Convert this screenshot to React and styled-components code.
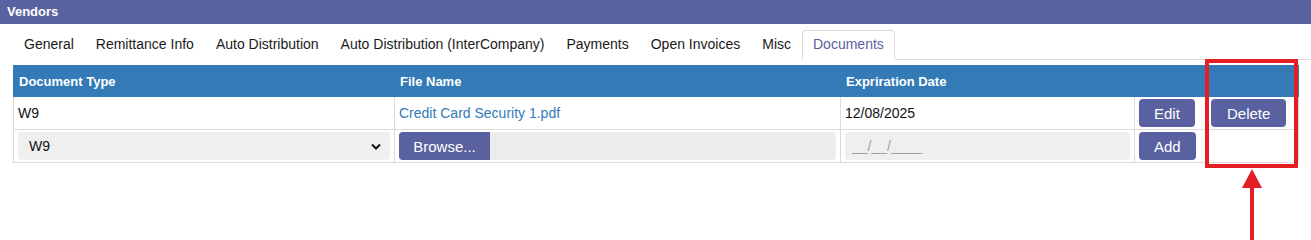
import styled, { createGlobalStyle } from 'styled-components';

const Global = createGlobalStyle`
  * { box-sizing: border-box; }
  html, body { margin: 0; min-height: 240px; background: #fff; }
  body {
    font-family: "Liberation Sans", Arial, sans-serif;
    color: #111;
  }
  #root { min-height: 240px; }
`;

const TitleBar = styled.div`
  height: 24px;
  background: #5961a0;
  color: #fff;
  font-size: 13px;
  font-weight: 700;
  padding: 0 7px 2px;
  display: flex;
  align-items: center;
`;

const Content = styled.div`
  padding: 6px 13px 0;
`;

const Tabs = styled.ul`
  list-style: none;
  margin: 0 -13px 0 0;
  padding: 0;
  display: flex;
  border-bottom: 1px solid #dcdcdc;
  height: 30px;
`;

const Tab = styled.li`
  padding: 0 10px 2px;
  height: 30px;
  display: flex;
  align-items: center;
  font-size: 14px;
  color: ${p => (p.$active ? '#5961a0' : '#1a1a1a')};
  border: 1px solid ${p => (p.$active ? '#dcdcdc' : 'transparent')};
  border-bottom-color: ${p => (p.$active ? '#fff' : 'transparent')};
  border-radius: 4px 4px 0 0;
  background: #fff;
  margin-bottom: -1px;
`;

const TableWrap = styled.div`
  position: relative;
  margin-top: 5px;
  height: 180px;
`;

const Table = styled.table`
  width: 1285px;
  border-collapse: collapse;
  table-layout: fixed;
  font-size: 14px;
`;

const Th = styled.th`
  width: ${p => p.$w}px;
  height: 31px;
  background: #337ab7;
  color: #fff;
  font-size: 13px;
  font-weight: 700;
  text-align: left;
  padding: 0 5px;
  border: 1px solid #337ab7;
  border-left-color: #d6e2ee;
  &:first-child { border-left-color: #337ab7; }
`;

const Td = styled.td`
  border: 1px solid #dcdcdc;
  padding: 2px 4px;
  height: 33px;
  vertical-align: middle;
  white-space: nowrap;
`;

const Link = styled.a`
  color: #337ab7;
  text-decoration: none;
`;

const Button = styled.button`
  height: 28px;
  padding: 0 ${p => (p.$wide ? 16 : 15)}px;
  margin-left: ${p => (p.$wide ? 1 : 0)}px;
  border: none;
  border-radius: 4px;
  background: #5961a0;
  color: #fff;
  font-family: inherit;
  font-size: 15px;
  display: block;
`;

const SelectBox = styled.div`
  height: 28px;
  background: #efefef;
  border-radius: 4px;
  display: flex;
  align-items: center;
  justify-content: space-between;
  padding: 0 9px 0 11px;
  font-size: 14px;
`;

const FileBox = styled.div`
  height: 28px;
  background: #ececec;
  border-radius: 4px;
  display: flex;
`;

const BrowseBtn = styled.span`
  width: 91px;
  background: #5961a0;
  color: #fff;
  border-radius: 4px 0 0 4px;
  font-size: 15px;
  display: flex;
  align-items: center;
  justify-content: center;
`;

const DateBox = styled.div`
  height: 28px;
  background: #efefef;
  border-radius: 4px;
  display: flex;
  align-items: center;
  padding: 0 7px;
  color: #a0a0a0;
  font-size: 14px;
`;

const Highlight = styled.div`
  position: absolute;
  left: 1192px;
  top: -6px;
  width: 93px;
  height: 109px;
  border: 4px solid #e41e25;
  pointer-events: none;
`;

const Arrow = styled.svg`
  position: absolute;
  left: 1229px;
  top: 104px;
  display: block;
`;

export default function App() {
  const tabs = ['General', 'Remittance Info', 'Auto Distribution', 'Auto Distribution (InterCompany)', 'Payments', 'Open Invoices', 'Misc', 'Documents'];
  return (
    <>
      <Global />
      <TitleBar>Vendors</TitleBar>
      <Content>
        <Tabs>
          {tabs.map(t => (
            <Tab key={t} $active={t === 'Documents'}>{t}</Tab>
          ))}
        </Tabs>
        <TableWrap>
          <Table>
            <thead>
              <tr>
                <Th $w={381}>Document Type</Th>
                <Th $w={446}>File Name</Th>
                <Th $w={294}>Expriration Date</Th>
                <Th $w={71}></Th>
                <Th $w={93}></Th>
              </tr>
            </thead>
            <tbody>
              <tr>
                <Td>W9</Td>
                <Td><Link href="#">Credit Card Security 1.pdf</Link></Td>
                <Td>12/08/2025</Td>
                <Td><Button>Edit</Button></Td>
                <Td><Button $wide>Delete</Button></Td>
              </tr>
              <tr>
                <Td>
                  <SelectBox>
                    <span>W9</span>
                    <svg width="10" height="7" viewBox="0 0 10 7">
                      <path d="M1 1.5 L5 5.5 L9 1.5" fill="none" stroke="#111" strokeWidth="2" />
                    </svg>
                  </SelectBox>
                </Td>
                <Td>
                  <FileBox><BrowseBtn>Browse...</BrowseBtn></FileBox>
                </Td>
                <Td><DateBox>__/__/____</DateBox></Td>
                <Td><Button>Add</Button></Td>
                <Td></Td>
              </tr>
            </tbody>
          </Table>
          <Highlight />
          <Arrow width="20" height="72" viewBox="0 0 20 72">
            <polygon points="10,0 20,19 0,19" fill="#e41e25" />
            <rect x="8" y="18" width="4" height="54" fill="#e41e25" />
          </Arrow>
        </TableWrap>
      </Content>
    </>
  );
}
